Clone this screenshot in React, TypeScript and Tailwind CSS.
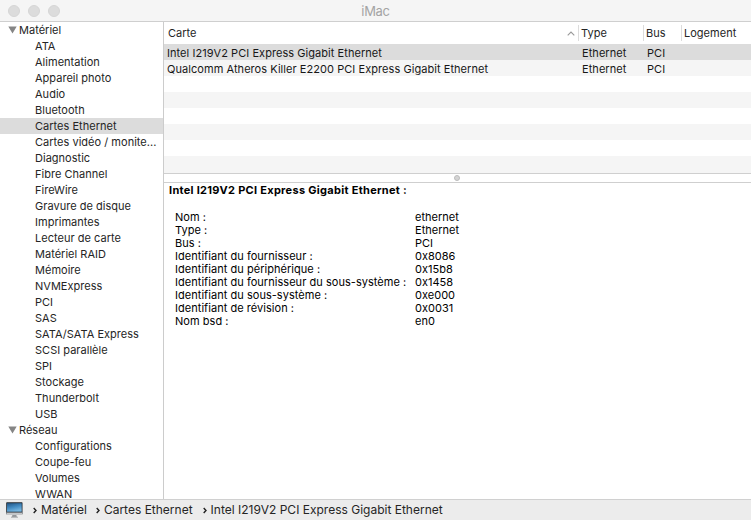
const materiel = [
  "ATA", "Alimentation", "Appareil photo", "Audio", "Bluetooth", "Cartes Ethernet",
  "Cartes vidéo / monite...", "Diagnostic", "Fibre Channel", "FireWire", "Gravure de disque",
  "Imprimantes", "Lecteur de carte", "Matériel RAID", "Mémoire", "NVMExpress", "PCI", "SAS",
  "SATA/SATA Express", "SCSI parallèle", "SPI", "Stockage", "Thunderbolt", "USB",
];
const reseau = ["Configurations", "Coupe-feu", "Volumes", "WWAN"];

const cards = [
  { name: "Intel I219V2 PCI Express Gigabit Ethernet", type: "Ethernet", bus: "PCI", selected: true },
  { name: "Qualcomm Atheros Killer E2200 PCI Express Gigabit Ethernet", type: "Ethernet", bus: "PCI", selected: false },
];

const details = [
  ["Nom :", "ethernet"],
  ["Type :", "Ethernet"],
  ["Bus :", "PCI"],
  ["Identifiant du fournisseur :", "0x8086"],
  ["Identifiant du périphérique :", "0x15b8"],
  ["Identifiant du fournisseur du sous-système :", "0x1458"],
  ["Identifiant du sous-système :", "0xe000"],
  ["Identifiant de révision :", "0x0031"],
  ["Nom bsd :", "en0"],
];

function Group({ title, items }: { title: string; items: string[] }) {
  return (
    <div>
      <div className="flex h-4 items-center pl-2">
        <svg className="mr-[2px] h-[8px] w-[9px]" viewBox="0 0 9 8">
          <path d="M0.3 0.5h8.4L4.5 7.6z" fill="#858585" />
        </svg>
        <span>{title}</span>
      </div>
      {items.map((item) => (
        <div
          key={item}
          className={`flex h-4 items-center pl-[35px] ${item === "Cartes Ethernet" ? "bg-[#dcdcdc]" : ""}`}
        >
          {item}
        </div>
      ))}
    </div>
  );
}

function Computer() {
  return (
    <svg className="h-[17px] w-[17px]" viewBox="0 0 17 17">
      <defs>
        <linearGradient id="screen" x1="0" y1="0" x2="0.4" y2="1">
          <stop offset="0" stopColor="#225483" />
          <stop offset="0.55" stopColor="#438bc2" />
          <stop offset="1" stopColor="#76b5df" />
        </linearGradient>
      </defs>
      <rect x="0.2" y="0.3" width="16.3" height="12" rx="0.6" fill="#20272e" />
      <rect x="1" y="1.2" width="14.7" height="8.5" fill="url(#screen)" />
      <rect x="0.4" y="10.5" width="15.9" height="2.5" fill="#c4c6c8" />
      <path d="M6.4 13h4l.5 2H5.9z" fill="#94989b" />
      <path d="M5 14.7h7v1H5z" fill="#a7a9ab" />
    </svg>
  );
}

function Chevron() {
  return (
    <svg className="h-[7px] w-[4px]" viewBox="0 0 4 7">
      <path d="M0.7 1l2.3 2.5L0.7 6" fill="none" stroke="#222" strokeWidth="1.4" />
    </svg>
  );
}

export default function App() {
  return (
    <div className="flex h-[520px] w-[751px] flex-col overflow-hidden whitespace-nowrap bg-white font-['Inter','Liberation_Sans',sans-serif] text-[11px] leading-4 tracking-[0.02px] text-[#252525]">
      <header className="grid h-[22px] shrink-0 grid-cols-[1fr_auto_1fr] items-center border-b border-[#cfcfcf] bg-[#f5f5f5]">
        <div className="flex gap-2 pl-2 pt-px">
          <i className="size-3 rounded-full border border-[#d6d6d6] bg-[#dcdcdc]" />
          <i className="size-3 rounded-full border border-[#d6d6d6] bg-[#dcdcdc]" />
          <i className="size-3 rounded-full border border-[#d6d6d6] bg-[#dcdcdc]" />
        </div>
        <h1 className="pt-px text-[13px] tracking-[-0.3px] text-[#a4a4a4]">iMac</h1>
      </header>

      <div className="flex min-h-0 flex-1">
        <nav className="w-[164px] shrink-0 overflow-hidden border-r border-[#cccccc]">
          <Group title="Matériel" items={materiel} />
          <Group title="Réseau" items={reseau} />
        </nav>

        <main className="flex min-w-0 flex-1 flex-col">
          <div className="grid h-[22px] shrink-0 grid-cols-[414px_65px_38px_1fr] items-center">
            <div className="flex items-center justify-between pl-1 pr-[3px]">
              <span>Carte</span>
              <svg className="h-[5px] w-[8px]" viewBox="0 0 8 5">
                <path d="M0.7 4.3L4 1l3.3 3.3" fill="none" stroke="#999" strokeWidth="1.1" />
              </svg>
            </div>
            <div className="border-l border-[#dcdcdc] pl-[2px]">Type</div>
            <div className="border-l border-[#dcdcdc] pl-[2px]">Bus</div>
            <div className="border-l border-[#dcdcdc] pl-[2px]">Logement</div>
          </div>
          {cards.map((card) => (
            <div
              key={card.name}
              className={`grid h-4 shrink-0 grid-cols-[418px_65px_1fr] items-center pt-px tracking-[0.055px] text-[#171717] ${card.selected ? "bg-[#dcdcdc]" : "bg-[#f5f5f5]"}`}
            >
              <span className="pl-[3px]">{card.name}</span>
              <span>{card.type}</span>
              <span>{card.bus}</span>
            </div>
          ))}
          <div className="h-4 shrink-0" />
          <div className="h-4 shrink-0 bg-[#f5f5f5]" />
          <div className="h-4 shrink-0" />
          <div className="h-4 shrink-0 bg-[#f5f5f5]" />
          <div className="h-4 shrink-0" />
          <div className="h-[17px] shrink-0 bg-[#f5f5f5]" />
          <div className="flex h-[10px] shrink-0 items-center justify-center border-y border-[#cfcfcf] pr-px">
            <i className="size-[6px] rounded-full border border-[#bcbcbc] bg-[#d4d4d4]" />
          </div>
          <section className="leading-[13px] text-black">
            <h2 className="pl-[5px] pt-px font-bold tracking-[0.29px]">Intel I219V2 PCI Express Gigabit Ethernet :</h2>
            <dl className="pl-[11px] pt-[14px]">
              {details.map(([label, value]) => (
                <div key={label} className="grid h-[13px] grid-cols-[240px_1fr]">
                  <dt className="tracking-[0.04px]">{label}</dt>
                  <dd>{value}</dd>
                </div>
              ))}
            </dl>
          </section>
        </main>
      </div>

      <footer className="flex h-[21px] shrink-0 items-center border-t border-[#d0d0d0] bg-[#ececec] pl-[6px] text-[12px] tracking-normal">
        <Computer />
        <span className="ml-[10px] flex items-center gap-1"><Chevron />Matériel</span>
        <span className="ml-[9px] flex items-center gap-1"><Chevron />Cartes Ethernet</span>
        <span className="ml-[10px] flex items-center gap-1"><Chevron />Intel I219V2 PCI Express Gigabit Ethernet</span>
      </footer>
    </div>
  );
}
